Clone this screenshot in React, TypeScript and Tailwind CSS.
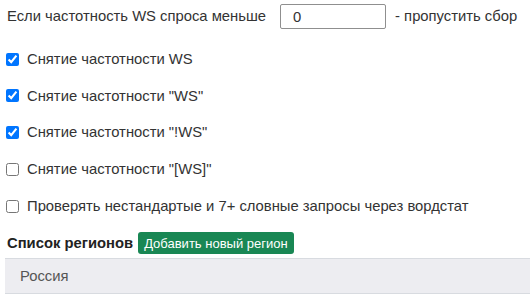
import React, { useState } from 'react';

const OPTIONS = [
  { label: 'Снятие частотности WS', checked: true },
  { label: 'Снятие частотности "WS"', checked: true },
  { label: 'Снятие частотности "!WS"', checked: true },
  { label: 'Снятие частотности "[WS]"', checked: false },
  { label: 'Проверять нестандартые и 7+ словные запросы через вордстат', checked: false },
];

export default function App() {
  const [minFreq, setMinFreq] = useState('0');
  const [flags, setFlags] = useState(OPTIONS.map(o => o.checked));

  return (
    <div className="w-[530px] h-[300px] overflow-hidden bg-white pl-[6px] pt-[4px] font-['Liberation_Sans',Arial,sans-serif] text-[14.8px] text-[#333]">
      {/* Min frequency */}
      <div className="flex items-center h-[25px] pl-[1px]">
        <span>Если частотность WS спроса меньше</span>
        <input
          type="text"
          value={minFreq}
          onChange={(e) => setMinFreq(e.target.value)}
          className="ml-[14px] w-[106px] h-[25px] border border-[#8f8f8f] rounded-[2px] pl-[12px] text-[14.8px] text-[#333] outline-none"
        />
        <span className="ml-[9px]">- пропустить сбор</span>
      </div>

      {/* Options */}
      <div className="mt-[20px] flex flex-col gap-[16.75px]">
        {OPTIONS.map((o, i) => (
          <label key={o.label} className="flex items-center h-[20px]">
            <input
              type="checkbox"
              checked={flags[i]}
              onChange={() => setFlags(flags.map((f, j) => (j === i ? !f : f)))}
              className="w-[13px] h-[13px] m-0 accent-[#0075ff]"
            />
            <span className="ml-[8px]">{o.label}</span>
          </label>
        ))}
      </div>

      {/* Regions */}
      <div className="mt-[16px] flex items-center h-[22px] pl-[1px]">
        <span className="font-bold text-[#222]">Список регионов</span>
        <button className="ml-[5px] h-[22px] px-[6px] rounded-[3px] bg-[#198754] text-white text-[13px] leading-none">
          Добавить новый регион
        </button>
      </div>
      <div className="mt-[4px] -ml-[1px] h-[36px] flex items-center pl-[15px] bg-[#ededf1] border-y border-[#d8dbe0] text-[#555]">
        Россия
      </div>
    </div>
  );
}
